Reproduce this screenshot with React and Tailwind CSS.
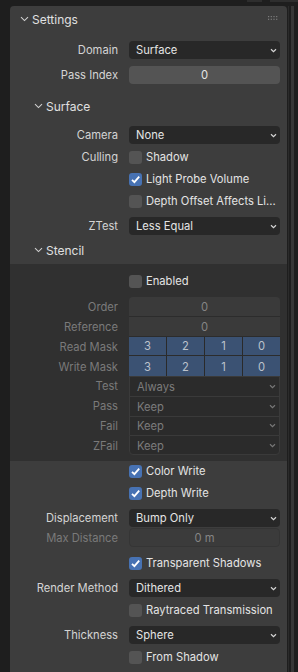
import React from "react";

const Chevron = ({ color = "#cfcfcf" }) => (
  <svg width="9" height="6" viewBox="0 0 9 6">
    <path d="M1 1.2 L4.5 4.6 L8 1.2" stroke={color} strokeWidth="1.1" fill="none" />
  </svg>
);

const SmallChevron = ({ color = "#d6d6d6" }) => (
  <svg width="7" height="5" viewBox="0 0 7 5">
    <path d="M1 1.2 L3.5 3.6 L6 1.2" stroke={color} strokeWidth="1.2" fill="none" />
  </svg>
);

const Grip = () => (
  <svg width="11" height="5" viewBox="0 0 11 5">
    {[0, 1].map((r) =>
      [0, 1, 2, 3].map((c) => (
        <rect key={`${r}-${c}`} x={c * 2.7} y={r * 2.7} width="1.2" height="1.2" fill="#7d7d7d" />
      ))
    )}
  </svg>
);

function Header({ title, indent }) {
  return (
    <div className={`flex items-center h-[25px] ${indent ? "pl-[24px]" : "pl-[10px]"}`}>
      <Chevron />
      <span className="ml-[3px] text-[12px] text-[#e0e0e0] translate-y-[1px]">{title}</span>
      {!indent && (
        <div className="ml-auto mr-[8px]">
          <Grip />
        </div>
      )}
    </div>
  );
}

function Row({ label, dim, className = "", h = "h-[18px]", children }) {
  return (
    <div className={`flex items-center ${h} ${className}`}>
      <div className={`w-[108px] text-right translate-y-[1px] ${dim ? "text-[#7a7a7a]" : "text-[#d4d4d4]"}`}>{label}</div>
      <div className="ml-[11px] w-[151px] h-full">{children}</div>
    </div>
  );
}

function Dropdown({ value }) {
  return (
    <div className="h-full rounded-[4px] bg-[#282828] flex items-center justify-between pl-[7px] pr-[3px] text-[#e4e4e4]">
      <span className="translate-y-[1px]">{value}</span>
      <SmallChevron />
    </div>
  );
}

function Check({ checked, label, className = "" }) {
  return (
    <div className={`flex items-center h-[18px] pl-[119px] ${className}`}>
      <div
        className={`w-[13px] h-[13px] rounded-[3px] flex items-center justify-center ${
          checked ? "bg-[#4772b3]" : "bg-[#545454]"
        }`}
      >
        {checked && (
          <svg width="11" height="11" viewBox="0 0 11 11">
            <path d="M2 5.8 L4.4 8.2 L9.2 2.6" stroke="#ffffff" strokeWidth="1.8" fill="none" />
          </svg>
        )}
      </div>
      <span className="ml-[4px] text-[#e4e4e4] translate-y-[1px]">{label}</span>
    </div>
  );
}

function MaskCells() {
  return (
    <div className="h-full flex gap-px bg-[#2a2a2a]">
      {["3", "2", "1", "0"].map((n) => (
        <div key={n} className="flex-1 bg-[#3b5273] flex items-center justify-center text-[#bcc2cc]">
          <span className="translate-y-[1px]">{n}</span>
        </div>
      ))}
    </div>
  );
}

export default function App() {
  return (
    <div className="w-[298px] h-[672px] bg-[#1e1e1e] overflow-hidden font-['Inter',sans-serif] text-[11.2px] leading-none flex flex-col">
      <div className="h-[6px] flex">
        <div className="ml-[247px] w-[15px] h-[2px] bg-[#2e2e2e]" />
        <div className="ml-[8px] w-[28px] h-[2px] bg-[#2e2e2e]" />
      </div>
      <div className="flex flex-1">
        <div className="w-[10px]" />
        <div className="w-[277px] bg-[#3d3d3d] rounded-t-[4px] flex flex-col">
          <Header title="Settings" />
          <Row label="Domain" className="mt-[10px]">
            <Dropdown value="Surface" />
          </Row>
          <Row label="Pass Index" className="mt-[7px]">
            <div className="h-full rounded-[4px] bg-[#545454] flex items-center justify-center text-[#e6e6e6]">
              <span className="translate-y-[1px]">0</span>
            </div>
          </Row>

          <div className="mt-[9px]">
            <Header title="Surface" indent />
          </div>
          <Row label="Camera" className="mt-[8px]">
            <Dropdown value="None" />
          </Row>
          <div className="relative">
            <Check label="Shadow" className="mt-[4px]" />
            <div className="absolute left-0 top-[4px] w-[108px] h-[18px] flex items-center justify-end text-[#d4d4d4]">
              <span className="translate-y-[1px]">Culling</span>
            </div>
          </div>
          <Check checked label="Light Probe Volume" className="mt-[4px]" />
          <Check label="Depth Offset Affects Li..." className="mt-[4px]" />
          <Row label="ZTest" className="mt-[7px]">
            <Dropdown value="Less Equal" />
          </Row>

          <div className="mt-[2px]">
            <Header title="Stencil" indent />
          </div>
          <div className="bg-[#303030] mt-[2px] pb-[6px] flex flex-col">
            <Check label="Enabled" className="mt-[8px]" />
            <div className="mt-[7px] flex flex-col">
              <Row label="Order" dim h="h-[19.75px]">
                <div className="h-full rounded-t-[4px] bg-[#3a3a3a] border-b border-[#2c2c2c] flex items-center justify-center text-[#858585]">
                  <span className="translate-y-[1px]">0</span>
                </div>
              </Row>
              <Row label="Reference" dim h="h-[19.75px]">
                <div className="h-full bg-[#3a3a3a] border-b border-[#2c2c2c] flex items-center justify-center text-[#858585]">
                  <span className="translate-y-[1px]">0</span>
                </div>
              </Row>
              <Row label="Read Mask" dim h="h-[19.75px]">
                <div className="h-full border-b border-[#2c2c2c]">
                  <MaskCells />
                </div>
              </Row>
              <Row label="Write Mask" dim h="h-[19.75px]">
                <div className="h-full">
                  <MaskCells />
                </div>
              </Row>
              {["Test", "Pass", "Fail", "ZFail"].map((l, i) => (
                <Row key={l} label={l} dim h="h-[19.75px]">
                  <div
                    className={`h-full bg-[#2b2b2b] border-x border-t border-[#3a3a3a] flex items-center justify-between pl-[7px] pr-[3px] text-[#7c7c7c] ${
                      i === 3 ? "border-b rounded-b-[4px]" : ""
                    }`}
                  >
                    <span className="translate-y-[1px]">{i === 0 ? "Always" : "Keep"}</span>
                    <SmallChevron color="#777777" />
                  </div>
                </Row>
              ))}
            </div>
          </div>

          <Check checked label="Color Write" className="mt-[1px]" />
          <Check checked label="Depth Write" className="mt-[4px]" />
          <Row label="Displacement" className="mt-[7px]">
            <Dropdown value="Bump Only" />
          </Row>
          <Row label="Max Distance" dim className="mt-[1px]" h="h-[19px]">
            <div className="h-full rounded-[4px] bg-[#3b3b3b] border border-[#353535] flex items-center justify-center text-[#858585]">
              <span className="translate-y-[1px]">0 m</span>
            </div>
          </Row>
          <Check checked label="Transparent Shadows" className="mt-[7px]" />
          <Row label="Render Method" className="mt-[7px]">
            <Dropdown value="Dithered" />
          </Row>
          <Check label="Raytraced Transmission" className="mt-[4px]" />
          <Row label="Thickness" className="mt-[7px]">
            <Dropdown value="Sphere" />
          </Row>
          <Check label="From Shadow" className="mt-[4px]" />
        </div>
        <div className="w-[1px]" />
        <div className="w-[1px] bg-[#2b2b2b]" />
        <div className="w-[2px]" />
        <div className="w-[3px] bg-[#373737]" />
      </div>
    </div>
  );
}
